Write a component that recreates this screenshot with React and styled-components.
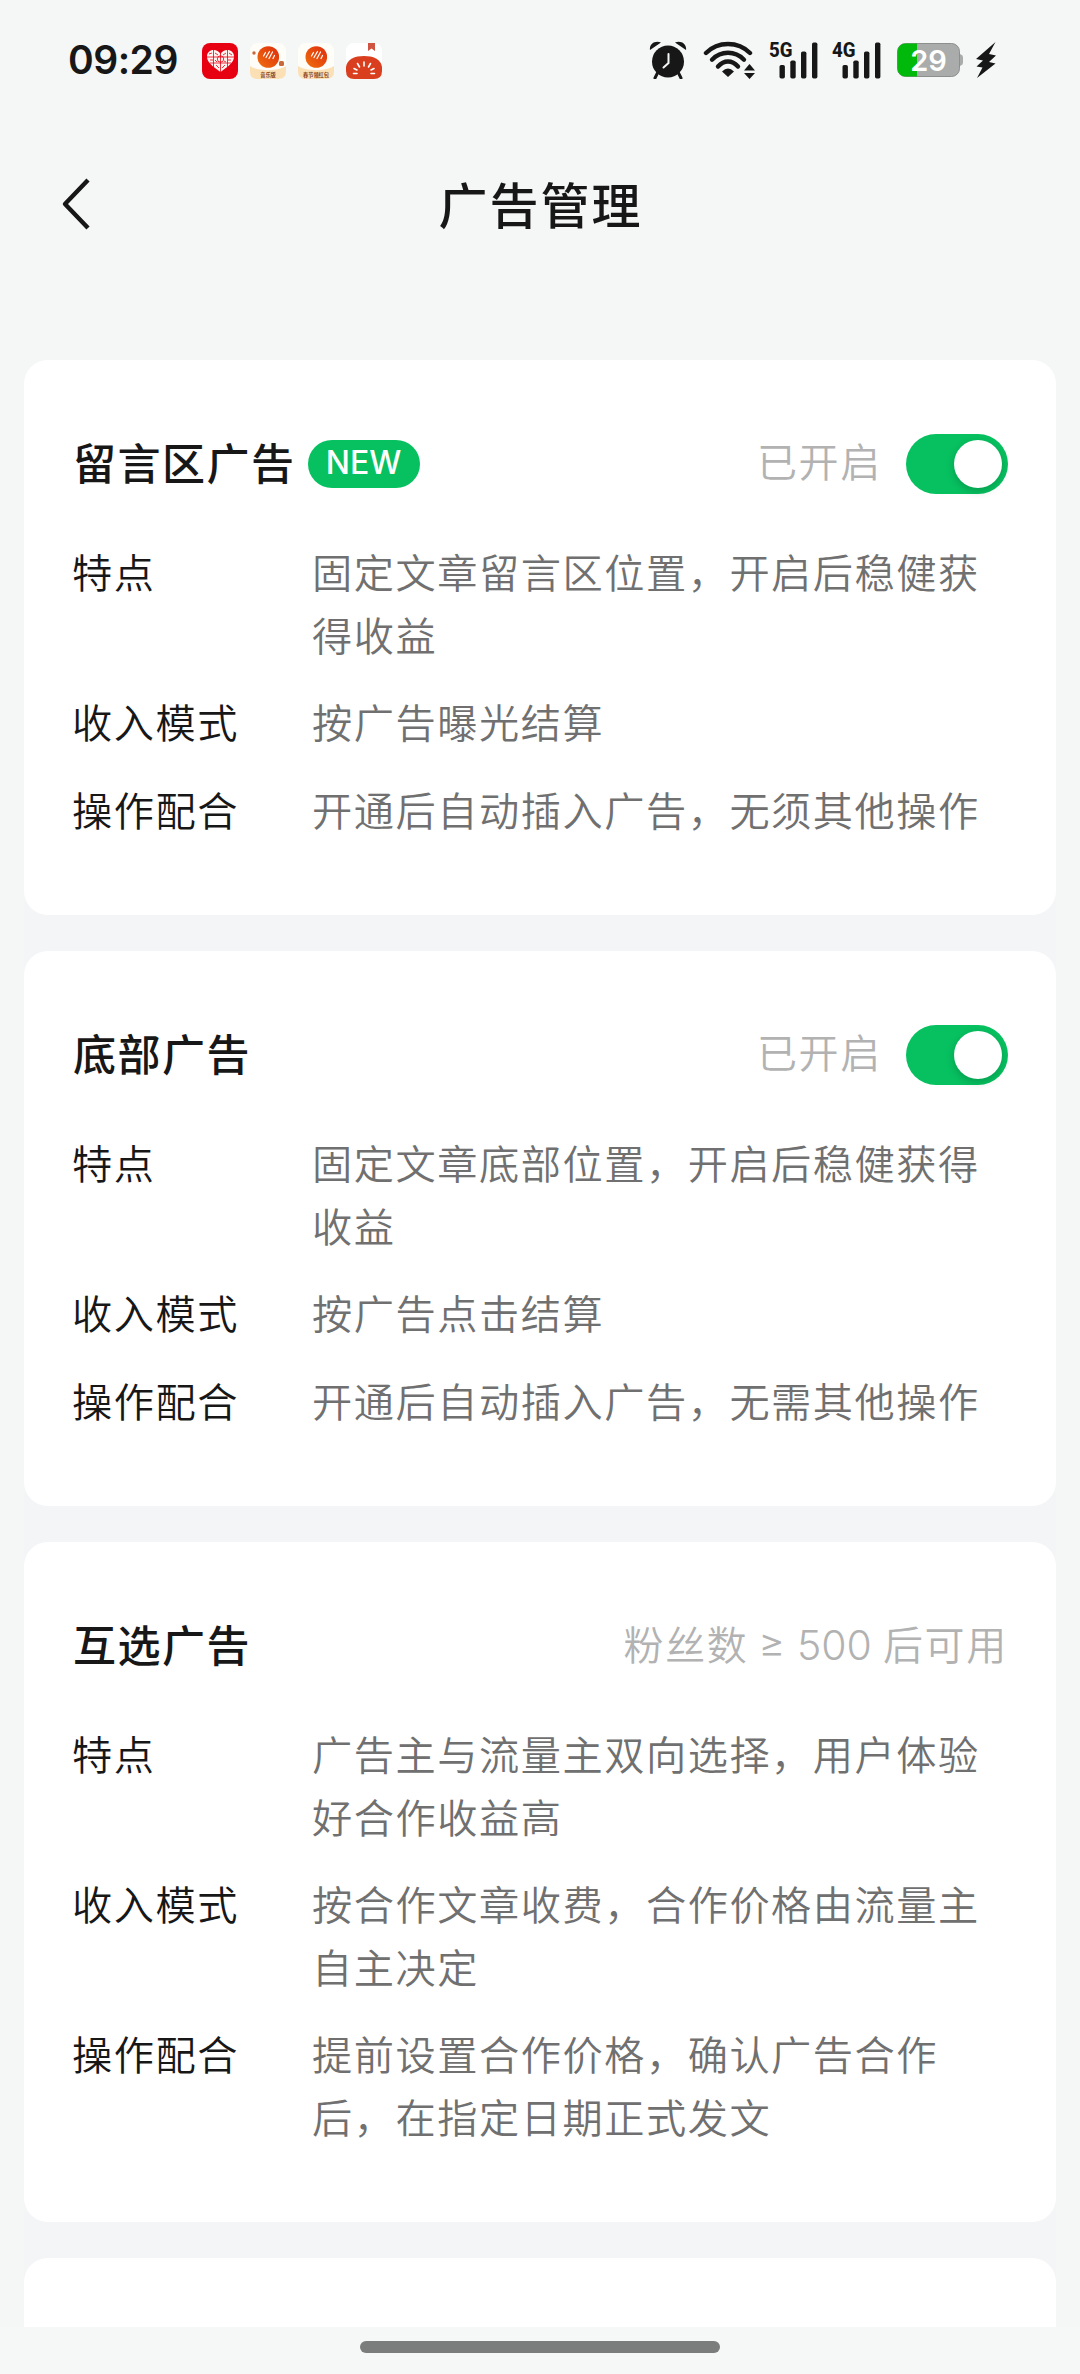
import React from "react";
import styled, { createGlobalStyle } from "styled-components";

const ads = [
    {
        title: "留言区广告",
        isNew: true,
        enabled: true,
        rows: [
            ["特点", "固定文章留言区位置，开启后稳健获得收益"],
            ["收入模式", "按广告曝光结算"],
            ["操作配合", "开通后自动插入广告，无须其他操作"],
        ],
    },
    {
        title: "底部广告",
        enabled: true,
        rows: [
            ["特点", "固定文章底部位置，开启后稳健获得收益"],
            ["收入模式", "按广告点击结算"],
            ["操作配合", "开通后自动插入广告，无需其他操作"],
        ],
    },
    {
        title: "互选广告",
        required: 500,
        rows: [
            ["特点", "广告主与流量主双向选择，用户体验好合作收益高"],
            ["收入模式", "按合作文章收费，合作价格由流量主自主决定"],
            ["操作配合", "提前设置合作价格，确认广告合作后，在指定日期正式发文"],
        ],
    },
];

const HeartApp = () => (
    <svg width="36" height="36" viewBox="0 0 36 36">
        <rect width="36" height="36" rx="8" fill="#e60012" />
        <path d="M18.500 29 C10 23 5 19 5 13.500 C5 9.500 8 7 11.500 7 C14.500 7 17 8.500 18.500 11 C20 8.500 22.500 7 25.500 7 C29 7 32 9.500 32 13.500 C32 19 27 23 18.500 29Z" fill="#fff3f0" />
        <g stroke="#e60012" strokeWidth=".8" fill="none">
            <path d="M18.500 8v22M11.500 7v17M25.500 7v17M5 14h27M8 20h21" />
            <circle cx="18.500" cy="16" r="3.200" />
            <path d="M7 11l3-1M13 10l3 2M27 10l3 2M21 12l3-2M8 17h3M13 17l2 2M26 17h3M22 18l2 1M14 22l3 3M23 22l-3 3" />
        </g>
    </svg>
);

const RedPacketApp = ({ label, sparks }) => (
    <svg width="36" height="36" viewBox="0 0 36 36">
        <defs>
            <linearGradient id="redPacketBall" x1="0" y1="1" x2="1" y2="0">
                <stop offset="0" stopColor="#f0700f" />
                <stop offset="1" stopColor="#de2c0c" />
            </linearGradient>
        </defs>
        <rect width="36" height="36" rx="8" fill="#fffdf8" />
        <path d="M0 23 C8 28.500 28 28.500 36 23 V29 Q36 36 28 36 H8 Q0 36 0 29Z" fill="#fbe0b6" />
        <circle cx="18.300" cy="14" r="10.800" fill="url(#redPacketBall)" />
        <path d="M13.500 13l2-3.500M16 14.500l3.500-6M19 15.500l3.500-6.500M23 15.500l1.500-3" fill="none" stroke="#fff" strokeWidth="1.200" strokeLinecap="round" />
        {sparks && (
            <g fill="#c9683b">
                <circle cx="4" cy="10" r="1.700" />
                <rect x="29" y="18" width="5" height="5" rx="1.500" />
            </g>
        )}
        <text x="18" y="34" textAnchor="middle" fontSize="5.200" fontWeight="700" fill="#874321">{label}</text>
    </svg>
);

const TomatoApp = () => (
    <svg width="36" height="36" viewBox="0 0 36 36">
        <rect width="36" height="36" rx="8" fill="#fff" />
        <path d="M22 0h7v8l-3.500-2.500L22 8z" fill="#cf5542" />
        <path d="M0 24 C1 16 9 13 18 13 S35 16 36 24 V28 Q36 36 28 36 H8 Q0 36 0 28Z" fill="#d93f1e" />
        <path d="M18 19v4M11.500 20.500l2 3.500M24.500 20.500l-2 3.500M8 25.500l3 1.500M28 25.500l-3 1.500M7.500 30.500h3.500M28.500 30.500H25" stroke="#fff" strokeWidth="1.600" strokeLinecap="round" />
    </svg>
);

const AlarmIcon = () => (
    <svg width="38" height="38" viewBox="0 0 38 38" fill="#171717">
        <path d="M1 9 C0 3 6 -1 12 1.500Z M37 9 C38 3 32 -1 26 1.500Z" />
        <circle cx="19" cy="20.500" r="16" />
        <path d="M8.500 32l-2.500 5M29.500 32l2.500 5" stroke="#171717" strokeWidth="3" strokeLinecap="round" />
        <path d="M19.500 13v9l-5 4.500" fill="none" stroke="#f5f7f6" strokeWidth="2" strokeLinecap="round" />
    </svg>
);

const WifiIcon = () => (
    <svg width="52" height="38" viewBox="0 0 52 38" fill="none" stroke="#171717" strokeWidth="4.400" strokeLinecap="round">
        <path d="M3 12 C15 0 35 0 47 12" />
        <path d="M9 18.700 C18 9.500 32 9.500 41 18.700" />
        <path d="M15 25.500 C21 18.800 29 18.800 35 25.500" />
        <path d="M25 36l-6-5.500q6-6 12 0z" fill="#171717" stroke="none" />
        <path d="M41 29.500h11l-5.500-6.500zM41 32h11l-5.500 6z" fill="#171717" stroke="none" />
    </svg>
);

const SignalIcon = ({ label }) => (
    <svg width="50" height="44" viewBox="-2 -3 50 44" fill="#171717">
        <text x="-1" y="15.500" fontFamily="Roboto, sans-serif" fontSize="20.500" fontWeight="800" textLength="23.500" lengthAdjust="spacingAndGlyphs">{label}</text>
        <rect x="9.500" y="24" width="5.400" height="13.500" rx="1.700" />
        <rect x="20.300" y="19.500" width="5.400" height="18" rx="1.700" />
        <rect x="31" y="10.500" width="5.400" height="27" rx="1.700" />
        <rect x="42" y="1.500" width="5.400" height="36" rx="1.700" />
    </svg>
);

const BatteryIcon = () => (
    <svg width="66" height="34" viewBox="0 0 66 34">
        <rect x=".5" y=".5" width="62" height="33" rx="8" fill="#aaacab" stroke="#8d8f8e" />
        <path d="M63 11q3 1 3 3v6q0 2-3 3z" fill="#aaacab" />
        <path d="M20 .5H8.500a8 8 0 0 0-8 8v17a8 8 0 0 0 8 8H20z" fill="#00b90b" />
        <text x="31.500" y="28" textAnchor="middle" fontFamily="Inter, sans-serif" fontSize="29" fontWeight="600" fill="#fff">29</text>
    </svg>
);

const BoltIcon = () => (
    <svg width="22" height="36" viewBox="0 0 22 36">
        <path d="M20.500 0L1 17l7 1.500L1.500 24.500l6 1L2 36 20.500 21.500l-6.500-1.500 7-6.500-7-1.500z" fill="#171717" />
    </svg>
);

const App = () => {
    return (
        <>
            <GlobalStyle />
            <Screen>
                <StatusBar>
                    <Clock>09:29</Clock>
                    <Notifications>
                        <HeartApp />
                        <RedPacketApp label="音乐版" sparks />
                        <RedPacketApp label="春节领红包" />
                        <TomatoApp />
                    </Notifications>
                    <SystemIcons>
                        <AlarmIcon />
                        <WifiIcon />
                        <Signals>
                            <SignalIcon label="5G" />
                            <SignalIcon label="4G" />
                        </Signals>
                        <Power>
                            <BatteryIcon />
                            <BoltIcon />
                        </Power>
                    </SystemIcons>
                </StatusBar>
                <NavBar>
                    <BackButton aria-label="返回">
                        <svg width="30" height="52" viewBox="0 0 30 52" fill="none" stroke="#171717" strokeWidth="4.400">
                            <path d="M27 2L4 26l23 24" strokeLinejoin="round" />
                        </svg>
                    </BackButton>
                    <PageTitle>广告管理</PageTitle>
                </NavBar>
                <CardList>
                    {ads.map((ad) => (
                        <Card key={ad.title}>
                            <CardHeader>
                                <CardTitle>{ad.title}</CardTitle>
                                {ad.isNew && <Badge>NEW</Badge>}
                                <Status>
                                    {ad.enabled ? "已开启" : <>粉丝数<Amount>≥ {ad.required}</Amount>后可用</>}
                                </Status>
                                {ad.enabled && <Switch role="switch" aria-checked="true"><Knob /></Switch>}
                            </CardHeader>
                            <Rows>
                                {ad.rows.map(([label, text]) => (
                                    <Row key={label}>
                                        <Label>{label}</Label>
                                        <Description>{text}</Description>
                                    </Row>
                                ))}
                            </Rows>
                        </Card>
                    ))}
                    <Card />
                </CardList>
                <GestureArea>
                    <GestureBar />
                </GestureArea>
            </Screen>
        </>
    );
};

const GlobalStyle = createGlobalStyle`
    * {
        box-sizing: border-box;
    }
    body {
        margin: 0;
        background: #f5f7f6;
        font-family: Inter, "Noto Sans CJK SC", sans-serif;
    }
`;

const Screen = styled.div`
    width: 1080px;
    height: 2374px;
    display: flex;
    flex-direction: column;
    overflow: hidden;
    background: #f5f7f6;
    color: #171717;
`;

const StatusBar = styled.div`
    height: 122px;
    flex: none;
    display: flex;
    align-items: center;
    padding: 0 83px 0 68px;
`;

const Clock = styled.div`
    width: 134px;
    font-size: 39px;
    font-weight: 600;
    letter-spacing: -0.5px;
    line-height: 46px;
    padding-bottom: 2px;
    white-space: nowrap;
`;

const Notifications = styled.div`
    display: flex;
    gap: 12px;
    svg {
        font-family: "Noto Sans CJK SC", sans-serif;
    }
`;

const SystemIcons = styled.div`
    display: flex;
    align-items: center;
    gap: 16px;
    margin-left: auto;
    padding-bottom: 2px;
`;

const Signals = styled.div`
    display: flex;
    gap: 13px;
    margin-left: -3px;
`;

const Power = styled.div`
    display: flex;
    align-items: center;
    gap: 12px;
`;

const NavBar = styled.div`
    height: 168px;
    flex: none;
    display: grid;
    grid-template-columns: 120px 1fr 120px;
    align-items: center;
    margin-bottom: 70px;
`;

const BackButton = styled.button`
    display: flex;
    padding: 0 0 4px 61px;
    border: 0;
    background: none;
`;

const PageTitle = styled.h1`
    margin: 0;
    padding: 2px 0 0 1px;
    text-align: center;
    font-size: 49px;
    font-weight: 500;
    letter-spacing: 2px;
    line-height: 72px;
`;

const CardList = styled.div`
    height: 1967px;
    flex: none;
    display: flex;
    flex-direction: column;
    gap: 36px;
    margin: 0 24px;
    overflow: hidden;
    background: linear-gradient(#f5f7f6 40px, #f4f5f7 40px);
`;

const Card = styled.section`
    flex: none;
    min-height: 120px;
    padding: 73px 48px 72px 49px;
    border-radius: 24px;
    background: #fff;
`;

const CardHeader = styled.div`
    height: 62px;
    display: flex;
    align-items: center;
`;

const CardTitle = styled.h2`
    margin: 0;
    font-size: 43px;
    font-weight: 500;
    letter-spacing: 1.5px;
    line-height: 62px;
`;

const Badge = styled.span`
    width: 112px;
    height: 48px;
    margin-left: 12px;
    border-radius: 24px;
    background: #07c160;
    color: #fff;
    font-size: 32px;
    font-weight: 500;
    line-height: 46px;
    text-align: center;
`;

const Status = styled.span`
    margin-left: auto;
    color: #b2b2b2;
    font-size: 40px;
    font-weight: 350;
    letter-spacing: 1.7px;
    line-height: 60px;
    padding-bottom: 2px;
`;

const Amount = styled.span`
    margin: 0 11px 0 10px;
    font-size: 41px;
    letter-spacing: 0;
`;

const Switch = styled.div`
    width: 102px;
    height: 60px;
    display: flex;
    justify-content: flex-end;
    margin-left: 24px;
    padding: 6px;
    border-radius: 30px;
    background: #07c160;
`;

const Knob = styled.div`
    width: 48px;
    height: 48px;
    border-radius: 50%;
    background: #fff;
    box-shadow: 0 3px 8px rgba(0, 0, 0, 0.2);
`;

const Rows = styled.div`
    display: flex;
    flex-direction: column;
    gap: 25px;
    margin-top: 48px;
`;

const Row = styled.div`
    display: grid;
    grid-template-columns: 240px 1fr;
    margin-left: -1px;
    font-size: 40.2px;
    font-weight: 350;
    letter-spacing: 1.55px;
    line-height: 62.5px;
`;

const Label = styled.div`
    white-space: nowrap;
`;

const Description = styled.div`
    width: 680px;
    color: #707070;
`;

const GestureArea = styled.div`
    flex: 1;
    display: flex;
    justify-content: center;
    padding-top: 14px;
    background: #f5f8f7;
`;

const GestureBar = styled.div`
    width: 360px;
    height: 12px;
    border-radius: 6px;
    background: #7b7d7c;
`;

export default App;
